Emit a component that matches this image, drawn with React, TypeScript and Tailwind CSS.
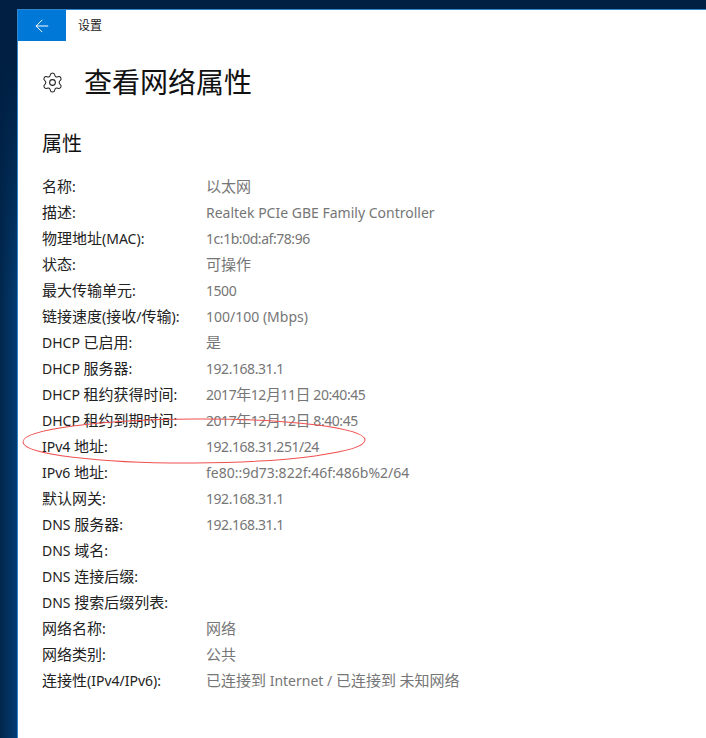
import { ArrowLeft, Settings } from "lucide-react";

const font = "font-['Noto_Sans','Noto_Sans_CJK_SC',sans-serif]";

// the CJK runs sit a size above the latin text in the screenshot
function Mixed({ text }: { text: string }) {
  const parts = text.split(/([\u4e00-\u9fff]+)/);
  return (
    <>
      {parts.map((p, i) =>
        i % 2 === 1 ? (
          <span key={i} className="text-[15px]">
            {p}
          </span>
        ) : (
          p
        ),
      )}
    </>
  );
}

type Row = { label: string; value: string; tight?: boolean };

const rows: Row[] = [
  { label: "名称:", value: "以太网" },
  { label: "描述:", value: "Realtek PCIe GBE Family Controller" },
  { label: "物理地址(MAC):", value: "1c:1b:0d:af:78:96", tight: true },
  { label: "状态:", value: "可操作" },
  { label: "最大传输单元:", value: "1500", tight: true },
  { label: "链接速度(接收/传输):", value: "100/100 (Mbps)" },
  { label: "DHCP 已启用:", value: "是" },
  { label: "DHCP 服务器:", value: "192.168.31.1", tight: true },
  { label: "DHCP 租约获得时间:", value: "2017年12月11日 20:40:45", tight: true },
  { label: "DHCP 租约到期时间:", value: "2017年12月12日 8:40:45", tight: true },
  { label: "IPv4 地址:", value: "192.168.31.251/24", tight: true },
  { label: "IPv6 地址:", value: "fe80::9d73:822f:46f:486b%2/64" },
  { label: "默认网关:", value: "192.168.31.1", tight: true },
  { label: "DNS 服务器:", value: "192.168.31.1", tight: true },
  { label: "DNS 域名:", value: "" },
  { label: "DNS 连接后缀:", value: "" },
  { label: "DNS 搜索后缀列表:", value: "" },
  { label: "网络名称:", value: "网络" },
  { label: "网络类别:", value: "公共" },
  { label: "连接性(IPv4/IPv6):", value: "已连接到 Internet / 已连接到 未知网络" },
];

export default function App() {
  return (
    <div className={`relative h-[738px] w-[706px] overflow-hidden bg-[linear-gradient(180deg,#001f42_60px,transparent_300px),linear-gradient(90deg,#01264c,#033d73_17px,#001f42_17px)] pl-[17px] pt-[9px] ${font}`}>
      <div className="flex h-[729px] flex-col border-l border-t border-[#2f86cf] bg-white">
        <div className="flex h-[31px] items-center">
          <div className="flex h-full w-[48px] items-center justify-center bg-[#0078d7] text-white">
            <ArrowLeft size={20} strokeWidth={1.2} />
          </div>
          <span className="ml-3 text-xs text-[#222]">设置</span>
        </div>

        <div className="mt-[20px] flex h-[42px] items-center pl-[23px]">
          <Settings size={23} strokeWidth={1.1} className="text-[#222]" />
          <h1 className="ml-[20px] text-[28px] font-normal leading-[42px] text-[#111]">查看网络属性</h1>
        </div>

        <h2 className="mt-[26px] pl-[24px] text-xl font-normal leading-[30px] text-[#111]">属性</h2>

        <div className="mt-[15px] pl-[24px] text-sm">
          {rows.map(({ label, value, tight }) => (
            <div key={label} className="flex h-[26px] items-center">
              <div className="w-[164px] shrink-0 text-[#222]">
                <Mixed text={label} />
              </div>
              <div className={tight ? "tracking-[-0.45px] text-[#767676]" : "text-[#767676]"}>
                <Mixed text={value} />
              </div>
            </div>
          ))}
        </div>
      </div>

      {/* hand-drawn circle over the IPv4 row */}
      <svg className="absolute left-0 top-0" width="706" height="738" fill="none">
        <ellipse cx="194" cy="441" rx="171" ry="22" stroke="#f05050" strokeWidth="1" transform="rotate(-0.3 194 441)" />
      </svg>
    </div>
  );
}
